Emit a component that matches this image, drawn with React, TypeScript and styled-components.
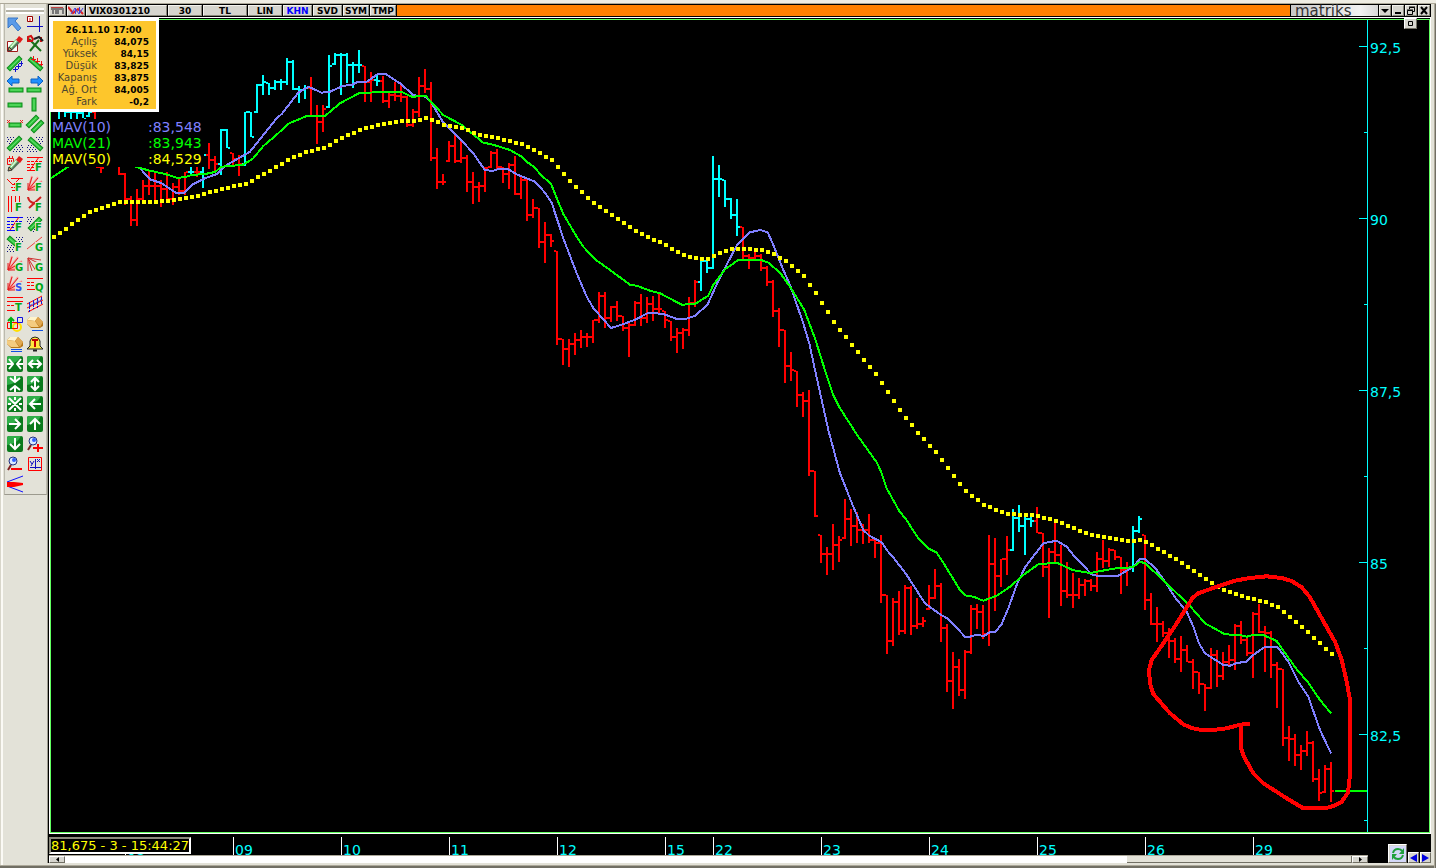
import React from "react";
import styled, { createGlobalStyle, css } from "styled-components";

const RED = "#ff0000";
const CYAN = "#00ffff";
const GREEN = "#00ff00";
const VIOLET = "#8080ff";
const YELLOW = "#ffff00";
const FACE = "#e3e2d8";

const GlobalStyle = createGlobalStyle`
  body { margin: 0; background: ${FACE}; font-family: "DejaVu Sans", Verdana, sans-serif; }
  * { box-sizing: border-box; }
  button { font: inherit; margin: 0; padding: 0; border: 0; }
  svg { display: block; }
`;

/* ---------- window layout ---------- */

const Window = styled.div`
  display: flex;
  min-height: 100vh;
  padding: 4px 5px 5px 0;
  background: ${FACE};
  box-shadow: inset 0 3px 0 #efede3, inset 0 4px 0 #aca899, inset -1px 0 0 #716f64,
    inset -2px 0 0 #aca899, inset 0 -2px 0 #716f64, inset 0 -3px 0 #aca899,
    inset 1px 0 0 #d8d6ca, inset 3px 0 0 #fbfaf5;
`;

const Sidebar = styled.aside`
  flex: 0 0 48px;
  padding-left: 4px;
  border-right: 1px solid #9c9a8e;
`;

const Palette = styled.div`
  height: 491px;
  padding-top: 4px;
  border-left: 1px solid #bcbaae;
  border-right: 1px solid #bcbaae;
  border-bottom: 1px solid #9c9a8e;
`;

const Grip = styled.div`
  height: 6px;
  margin: 0 2px 0 1px;
  border-top: 2px solid #fff;
  border-bottom: 2px solid #fff;
  background: #b4b2a6;
`;

const ToolGrid = styled.div`
  display: grid;
  grid-template-columns: 20px 20px;
  grid-auto-rows: 20px;
`;

const ToolButton = styled.button`
  display: grid;
  place-items: center;
  background: none;
`;

const Main = styled.main`
  flex: 1;
  min-width: 0;
  background: #000;
`;

const TitleBar = styled.header`
  display: flex;
  gap: 1px;
  height: 13px;
  padding: 1px;
  background: #000;
`;

const TitleButton = styled.button<{ $w: number; $on?: boolean; $left?: boolean }>`
  flex: 0 0 ${(p) => p.$w}px;
  padding-left: ${(p) => (p.$left ? 2 : 0)}px;
  background: #d6d5ce;
  border: 1px solid #f4f3ee;
  border-right-color: #8a887c;
  border-bottom-color: #8a887c;
  color: ${(p) => (p.$on ? "#0000ff" : "#000")};
  font-size: 9px;
  font-weight: bold;
  line-height: 10px;
  text-align: ${(p) => (p.$left ? "left" : "center")};
  white-space: nowrap;
`;

const TitleFill = styled.div`
  flex: 1;
  background: #ff8000;
`;

const Logo = styled.div`
  flex: 0 0 87px;
  padding-left: 4px;
  background: linear-gradient(90deg, #c8c8c8, #f2f2f2 80%, #d8d8d8);
  color: #333;
  font-size: 15px;
  line-height: 12px;
`;

const Frame = styled.section`
  position: relative;
  margin-left: 1px;
  padding-top: 1px;
  border: 1px solid #fff;
`;

const Plot = styled.div`
  border: 1px solid #60ff60;
  background: #000;
`;

const FullSvg = styled.svg`
  width: 100%;
  height: auto;
`;

const AxisText = styled.text`
  fill: ${CYAN};
  font-size: 14px;
`;

/* ---------- overlays on the chart ---------- */

const Quote = styled.dl`
  position: absolute;
  top: 0;
  left: 0;
  width: 109px;
  margin: 0;
  padding: 3px 7px 1px 0;
  border: 3px solid #fff;
  background: #fdc62c;
  color: #000;
  line-height: 12px;
`;

const QuoteTitle = styled.div`
  padding-left: 5px;
  font-size: 9px;
  font-weight: bold;
  text-align: center;
`;

const QuoteRow = styled.div`
  display: grid;
  grid-template-columns: 44px 1fr;
  text-align: right;
`;

const QuoteName = styled.dt`
  color: #4d4630;
  font-size: 10px;
`;

const QuoteValue = styled.dd`
  margin: 0;
  font-size: 9px;
  font-weight: bold;
`;

const Legend = styled.div`
  position: absolute;
  top: 101px;
  left: 1px;
  width: 153px;
  padding-left: 1px;
  background: #000;
  font-size: 14px;
  line-height: 16px;
`;

const LegendRow = styled.div<{ $color: string }>`
  display: grid;
  grid-template-columns: 96px 1fr;
  color: ${(p) => p.$color};
`;

const bevel = css`
  background: #d6d5ce;
  border: 1px solid #fff;
  border-right-color: #716f64;
  border-bottom-color: #716f64;
`;

const PinButton = styled.button`
  position: absolute;
  top: 0;
  right: 13px;
  display: grid;
  place-items: center;
  width: 13px;
  height: 11px;
  ${bevel}
`;

/* ---------- footer ---------- */

const Footer = styled.footer`
  position: relative;
  display: grid;
  grid-template-columns: 1fr 63px;
  height: 29px;
  margin-left: 1px;
`;

const AxisColumn = styled.div`
  min-width: 0;
`;

const Status = styled.output`
  position: absolute;
  top: 3px;
  left: 0;
  width: 142px;
  height: 17px;
  border: 2px solid #fff;
  border-top-color: #8a887c;
  border-left-color: #8a887c;
  background: #000;
  color: ${YELLOW};
  font-size: 13px;
  line-height: 14px;
  white-space: nowrap;
`;

const ScrollBar = styled.div`
  display: flex;
  height: 8px;
  background: #fff;
  border-top: 1px solid #aca899;
`;

const ScrollButton = styled.button`
  flex: 0 0 16px;
  display: grid;
  place-items: center;
  ${bevel}
`;

const ScrollTrack = styled.div`
  flex: 1;
  display: flex;
  justify-content: flex-end;
`;

const ScrollThumb = styled.div`
  flex: 0 0 225px;
  background: ${FACE};
  border-right: 1px solid #716f64;
  border-bottom: 1px solid #716f64;
`;

const FooterButtons = styled.div`
  display: flex;
  align-items: flex-end;
  justify-content: flex-end;
  gap: 1px;
`;

const CornerButton = styled.button<{ $w: number; $h: number }>`
  display: grid;
  place-items: center;
  width: ${(p) => p.$w}px;
  height: ${(p) => p.$h}px;
  ${bevel}
`;

/* ---------- chart data ---------- */

/* Bars are spaced six pixels apart; rows hold high, low and close in ticks,
   three ticks to the pixel, below the base line of their section. */
type Row = [number, number, number, 1?];
type Bar = { x: number; high: number; low: number; close: number; up: boolean };

const STEP = 6;
const section = (x0: number, base: number, rows: Row[]): Bar[] =>
  rows.map(([h, l, c, up], i) => ({
    x: x0 + i * STEP,
    high: base + Math.round(h / 3),
    low: base + Math.round(l / 3),
    close: base + Math.round(c / 3),
    up: up === 1,
  }));

const bars: Bar[] = [
  ...section(59, 40, [
    [200, 236, 210, 1], [205, 230, 216, 1], [205, 236, 216, 1], [200, 236, 218, 1],
    [205, 234, 236, 1], [200, 232, 216, 1], [210, 378, 382], [300, 398, 384],
    [300, 378, 350], [300, 376, 350], [300, 404, 402],
    [400, 495, 477], [468, 557, 540], [448, 557, 477], [420, 480, 437], [390, 465, 437],
    [400, 490, 437], [420, 500, 446], [396, 480, 477], [430, 495, 441], [410, 465, 453],
    [396, 465, 396], [380, 408, 396, 1], [380, 410, 396], [340, 443, 345, 1],
    [308, 388, 360], [348, 395, 372], [267, 405, 270, 1], [267, 325, 324, 1],
    [340, 375, 357], [345, 407, 372], [215, 377, 216, 1], [215, 290, 290, 1],
    [132, 218, 135, 1], [105, 165, 126, 1], [128, 165, 144, 1], [120, 150, 126, 1],
    [118, 150, 126, 1], [54, 135, 66, 1], [60, 150, 147, 1], [138, 190, 150, 1],
    [135, 178, 144, 1], [112, 230, 228], [195, 312, 246], [196, 275, 207],
    [45, 205, 78, 1], [38, 75, 45, 1], [40, 165, 45, 1], [40, 130, 75, 1],
    [65, 145, 75, 1], [30, 98, 75, 1], [78, 185, 126], [95, 187, 120],
    [105, 138, 123, 1], [108, 188, 183], [155, 205, 165], [125, 182, 168],
    [132, 185, 170], [168, 262, 254], [208, 262, 216], [112, 230, 138], [88, 160, 147],
  ]),
  ...section(431, 80, [
    [6, 242, 234], [205, 328, 306], [282, 315, 306], [183, 245, 198], [160, 250, 242],
    [180, 248, 233], [225, 335, 306], [276, 372, 320], [306, 365, 318], [262, 335, 264],
    [213, 265, 218], [208, 270, 262], [262, 308, 282], [250, 328, 256], [228, 345, 342],
    [288, 358, 300], [295, 422, 405], [357, 415, 384], [384, 503, 486], [427, 550, 465],
    [462, 500, 483], [512, 795, 777], [777, 855, 806], [778, 860, 792], [760, 825, 780],
    [750, 803, 771], [760, 800, 771], [720, 788, 720], [636, 730, 648], [636, 745, 714],
    [678, 725, 680], [663, 722, 708], [708, 752, 744], [724, 830, 735], [663, 738, 668],
    [642, 738, 714], [652, 730, 672], [648, 722, 687], [642, 705, 687], [694, 745, 720],
    [722, 782, 771], [744, 818, 758], [744, 808, 750], [652, 768, 668], [600, 680, 606],
    [535, 632, 542, 1], [538, 580, 564, 1], [228, 566, 297, 1], [255, 350, 297, 1],
    [300, 380, 357, 1], [355, 416, 405, 1], [357, 467, 441, 1],
  ]),
  ...section(743, 150, [
    [230, 330, 318], [312, 357, 324], [305, 330, 318], [312, 362, 354], [348, 407, 396],
    [390, 500, 483], [475, 590, 540], [540, 698, 648], [606, 692, 660], [662, 770, 735],
    [727, 800, 753], [720, 977, 963], [963, 1100, 1098], [1155, 1238, 1212],
    [1190, 1275, 1212], [1122, 1260, 1185], [1158, 1235, 1170], [1047, 1167, 1107],
    [1077, 1187, 1128], [1085, 1178, 1140], [1122, 1182, 1140], [1092, 1178, 1170],
    [1165, 1223, 1178], [1155, 1358, 1335],
  ]),
  ...section(887, 480, [
    [345, 522, 483], [355, 497, 366], [333, 465, 453], [315, 462, 324], [318, 465, 438],
    [355, 446, 432], [412, 440, 423], [315, 390, 354], [267, 357, 318], [310, 486, 444],
    [432, 636, 603], [516, 687, 560], [537, 647, 630], [510, 657, 516], [376, 521, 387],
    [372, 446, 396], [375, 477, 462], [165, 497, 252], [174, 392, 288], [237, 320, 237],
    [168, 285, 210], [87, 212, 114, 1], [75, 156, 137, 1], [108, 225, 117, 1],
    [110, 140, 122, 1], [82, 160, 158], [160, 290, 260], [204, 414, 215], [130, 245, 225],
    [195, 378, 333], [246, 353, 345], [279, 383, 345], [294, 357, 315], [297, 347, 303],
    [297, 332, 318], [216, 335, 237], [180, 264, 243], [204, 260, 210], [210, 240, 231],
    [230, 342, 270], [247, 318, 265], [138, 275, 153, 1], [108, 160, 117, 1],
  ]),
  ...section(1145, 500, [
    [105, 330, 300], [279, 375, 372], [321, 425, 372], [363, 410, 399], [384, 473, 423],
    [415, 488, 477], [408, 515, 450], [435, 487, 486], [478, 567, 516], [515, 582, 552],
    [552, 632, 564], [444, 567, 464], [450, 560, 528], [456, 540, 486], [435, 497, 480],
    [372, 510, 378], [363, 432, 420], [414, 467, 459], [336, 533, 342], [312, 400, 397],
    [378, 515, 400], [393, 533, 495], [486, 624, 507], [507, 738, 714], [678, 783, 717],
    [702, 797, 765], [736, 810, 753], [693, 768, 729], [723, 845, 837], [807, 903, 879],
    [795, 880, 807], [786, 906, 873],
  ]),
];

type Pt = [number, number];
/* Curve knots use the same ticks, measured from the section's own corner. */
const knots = (x0: number, y0: number, flat: number[]): Pt[] => {
  const out: Pt[] = [];
  for (let i = 0; i < flat.length; i += 2) out.push([x0 + flat[i] / 3, y0 + flat[i + 1] / 3]);
  return out;
};

const mav21: Pt[] = [
  ...knots(50, 40, [0, 417, 52, 382, 120, 345, 200, 350, 256, 380, 300, 392, 345, 402, 380, 413, 405, 412, 425, 405, 465, 402, 495, 396, 515, 380, 580, 374, 610, 355, 640, 318, 680, 284, 715, 251, 770, 228, 825, 228, 870, 190, 930, 158, 1055, 156, 1085, 170]),
  ...knots(420, 80, [17, 48, 70, 105, 125, 135, 190, 188, 215, 193, 270, 210, 305, 230, 320, 245, 345, 263, 360, 282, 393, 312, 430, 402, 470, 470, 490, 500, 525, 538, 570, 570, 630, 614, 650, 617, 690, 632, 720, 640, 785, 674, 825, 672]),
  ...knots(700, 150, [25, 437, 40, 405, 75, 358, 115, 330, 183, 330, 205, 338, 240, 368, 270, 410, 312, 478, 345, 565, 370, 645, 400, 735, 420, 775, 475, 860, 530, 937, 545, 970, 560, 1015, 598, 1083, 618, 1108, 655, 1165, 685, 1195, 710, 1208, 728, 1235, 780, 1320]),
  ...knots(840, 480, [375, 346, 400, 350, 430, 362, 470, 347, 510, 320, 550, 285, 595, 253, 650, 248, 700, 271, 750, 279, 820, 266]),
  ...knots(1120, 500, [0, 204, 38, 202, 60, 185, 75, 190, 110, 222, 150, 260, 210, 318, 255, 370, 315, 403, 360, 405, 380, 410, 400, 405, 430, 405, 470, 423, 490, 452, 530, 508, 565, 548, 600, 600, 633, 640]),
];

const mav10: Pt[] = [
  ...knots(50, 40, [240, 355, 270, 385, 300, 418, 335, 430, 380, 460, 400, 460, 425, 435, 460, 417, 500, 402, 530, 375, 600, 335, 640, 285, 680, 235, 695, 222, 745, 158, 775, 140, 815, 158, 840, 155, 880, 137, 905, 135, 920, 127, 950, 125, 985, 101, 1005, 101, 1050, 130, 1090, 165, 1105, 168]),
  ...knots(420, 80, [17, 50, 35, 70, 70, 128, 125, 182, 160, 220, 195, 271, 220, 272, 240, 266, 262, 266, 290, 283, 345, 305, 375, 338, 395, 368, 430, 475, 470, 580, 500, 650, 520, 684, 573, 744, 600, 736, 650, 717, 685, 698, 730, 702, 770, 717, 800, 716, 825, 707]),
  ...knots(700, 150, [22, 465, 60, 382, 110, 287, 150, 247, 180, 240, 203, 247, 220, 285, 250, 360, 270, 405, 310, 520, 328, 580, 345, 660, 365, 750, 385, 840, 420, 970, 460, 1070, 490, 1140, 508, 1157, 545, 1177, 560, 1200, 580, 1222]),
  ...knots(840, 480, [200, 285, 255, 370, 300, 403, 325, 417, 375, 470, 390, 470, 410, 464, 432, 468, 450, 456, 467, 455, 485, 432, 505, 385, 530, 315, 555, 262, 610, 190, 650, 182, 680, 200, 700, 225, 755, 283, 770, 287, 835, 287]),
  ...knots(1120, 500, [38, 202, 60, 177, 75, 178, 105, 203, 135, 245, 165, 292, 200, 335, 220, 380, 237, 430, 255, 460, 310, 495, 330, 497, 350, 489, 380, 485, 400, 465, 435, 440, 472, 440, 505, 485, 535, 545, 565, 590, 600, 690, 633, 760]),
];

const mav50: Pt[] = [
  ...knots(50, 40, [12, 590, 48, 566, 66, 551, 84, 540, 102, 527, 120, 516, 156, 503, 210, 487, 300, 486, 372, 480, 444, 467, 534, 443, 588, 432, 642, 402, 714, 360, 768, 336, 822, 324, 876, 293, 930, 270, 984, 255, 1056, 243, 1110, 241]),
  ...knots(420, 80, [18, 114, 36, 119, 72, 135, 126, 144, 180, 165, 234, 174, 306, 192, 360, 219, 396, 240, 450, 303, 522, 369, 576, 405, 630, 442, 684, 471, 720, 486, 792, 526, 828, 534]),
  ...knots(700, 150, [24, 327, 60, 309, 96, 297, 150, 297, 186, 300, 222, 312, 258, 333, 294, 363, 312, 378, 348, 429, 402, 516, 456, 585, 528, 672, 564, 727, 600, 780, 654, 849, 708, 906, 762, 978]),
  ...knots(840, 480, [378, 33, 414, 60, 432, 75, 486, 96, 504, 102, 576, 105, 630, 117, 666, 129, 720, 153, 756, 165, 810, 174, 864, 183]),
  ...knots(1120, 500, [60, 120, 78, 126, 132, 156, 186, 189, 240, 226, 294, 262, 330, 276, 384, 294, 438, 306, 474, 321, 510, 351, 564, 396, 636, 463]),
];

const valueAt = (line: Pt[], x: number) => {
  const i = Math.max(1, line.findIndex((p) => p[0] >= x));
  const [a, b] = [line[i - 1], line[i]];
  return a[1] + ((b[1] - a[1]) * (x - a[0])) / (b[0] - a[0]);
};

const dots: Pt[] = Array.from({ length: 214 }, (_, i) => {
  const x = 54 + i * STEP;
  return [x, Math.round(valueAt(mav50, x))];
});

const asPoints = (line: Pt[]) => line.map(([x, y]) => `${x.toFixed(1)},${y.toFixed(1)}`).join(" ");

const outline = knots(1120, 500, [383, 672, 360, 674, 320, 685, 280, 690, 245, 690, 215, 684, 190, 673, 150, 640, 100, 582, 90, 550, 87, 510, 95, 480, 130, 430, 165, 378, 200, 322, 218, 293, 235, 280, 290, 260, 345, 242, 390, 234, 440, 229, 485, 234, 515, 243, 545, 262, 570, 292, 605, 355, 645, 425, 665, 480, 680, 545, 690, 600, 690, 825, 684, 878, 665, 905, 640, 918, 615, 925, 550, 925, 500, 895, 430, 850, 400, 820, 372, 770, 363, 745, 363, 676]);

const prices: [string, number][] = [["92,5", 46], ["90", 218], ["87,5", 390], ["85", 562], ["82,5", 734]];
const days: [string, number][] = [
  ["08", 125], ["09", 233], ["10", 341], ["11", 449], ["12", 557], ["15", 665],
  ["22", 713], ["23", 821], ["24", 929], ["25", 1037], ["26", 1145], ["29", 1253],
];

function PriceChart() {
  return (
    <FullSvg viewBox="51 20 1378 812" role="img" aria-label="VIX0301210">
      <g shapeRendering="crispEdges">
        {bars.map((b, i) => {
          const color = b.up ? CYAN : RED;
          const before = i ? bars[i - 1].close : b.close;
          const open = Math.min(Math.max(before, b.high), b.low - 1);
          return (
            <g key={b.x} fill={color}>
              <rect x={b.x - 1} y={b.high} width={2} height={b.low - b.high} />
              <rect x={b.x - 3} y={open - 1} width={2} height={2} />
              <rect x={b.x + 1} y={b.close - 1} width={2} height={2} />
            </g>
          );
        })}
        <polyline points={asPoints(mav10)} fill="none" stroke={VIOLET} strokeWidth={2} />
        <polyline points={asPoints(mav21)} fill="none" stroke={GREEN} strokeWidth={2} />
        {dots.map(([x, y]) => (
          <rect key={x} x={x - 2} y={y - 2} width={4} height={4} fill={YELLOW} />
        ))}
        <rect x={1335} y={790} width={32} height={2} fill={GREEN} />
        <polyline points={asPoints(outline)} fill="none" stroke={RED} strokeWidth={4} strokeLinejoin="round" strokeLinecap="square" />
        <rect x={1367} y={20} width={1} height={812} fill={CYAN} />
        {prices.map(([, y]) => (
          <g key={y} fill={CYAN}>
            <rect x={1359} y={y} width={8} height={1} />
            <rect x={1364} y={y + 86} width={3} height={1} />
          </g>
        ))}
      </g>
      {prices.map(([label, y]) => (
        <AxisText key={y} x={1370} y={y + 7}>{label}</AxisText>
      ))}
    </FullSvg>
  );
}

function TimeAxis() {
  return (
    <FullSvg viewBox="49 834 1319 21" role="img" aria-label="26.11.10">
      {days.map(([label, x]) => (
        <g key={x}>
          <rect x={x} y={837} width={1} height={18} fill="#fff" />
          <AxisText x={x + 2} y={855}>{label}</AxisText>
        </g>
      ))}
    </FullSvg>
  );
}

/* ---------- toolbar icons ---------- */

const Stick = ({ d }: { d: string }) => (
  <>
    <path d={d} stroke="#0b8a18" strokeWidth={5} strokeLinecap="square" />
    <path d={d} stroke="#34cc44" strokeWidth={3} strokeLinecap="square" />
    <path d={d} stroke="#66dc6c" strokeWidth={1} strokeLinecap="square" />
  </>
);

const Letter = ({ c, color = "#00a818" }: { c: string; color?: string }) => (
  <>
    <rect x={8} y={6} width={8} height={10} fill={FACE} />
    <text x={8} y={15} fontSize={10} fontWeight="bold" fill={color}>{c}</text>
  </>
);

const Hatch = ({ flip }: { flip?: boolean }) => (
  <g stroke="#101080" strokeDasharray="1 2" shapeRendering="crispEdges" transform={flip ? "translate(16 0) scale(-1 1)" : undefined}>
    <path d="M0 1h9M1 3h6M0 5h5M2 7h2M11 9h5M9 11h7M7 13h9M6 15h10" />
  </g>
);

const Pencil = () => (
  <>
    <path d="M3 13L11 5" stroke="#55705a" strokeWidth={5} />
    <path d="M3 12L10 4" stroke="#8fdc8f" strokeWidth={3} />
    <path d="M4 11L10 4" stroke="#fff" />
    <path d="M9 4l3-4 4 3-3 4z" fill="#e01818" />
    <path d="M1 15l1-4 3 3z" fill="#caa060" stroke="#333" />
  </>
);

const Fan = () => (
  <>
    <path d="M1 14L5 0M1 14L11 1M1 14L15 5M1 14L15 11" stroke="#ff9a9a" strokeWidth={2} />
    <path d="M1 14L5 1M1 14L11 2M1 14L15 6M1 14V7M1 14h8" stroke="#e02020" />
  </>
);

const Tile = ({ d }: { d: string }) => (
  <>
    <rect width={16} height={16} rx={2} fill="#0a7a1c" />
    <path d="M0 2Q0 0 2 0H14Q10 8 0 9z" fill="#2fae48" />
    <path d={d} stroke="#fff" strokeWidth={2} />
  </>
);

const Eraser = ({ lines }: { lines: number }) => (
  <>
    <path d="M0 4l3-3h8l5 5v4l-3 2H4L0 8z" fill="#b87818" />
    <path d="M0 4l3-3h8l-3 4z" fill="#fff4cc" />
    <path d="M0 4l8 1 4 6H4L0 8z" fill="#f4cc80" />
    <path d="M8 5l3-4 5 5-3 5z" fill="#e0a850" />
    <path d={lines > 1 ? "M4 13.500h11M4 15.500h11" : "M5 14.500h11"} stroke="#1050e0" />
  </>
);

const Lens = ({ plus }: { plus?: boolean }) => (
  <>
    <path d="M4 9L1 14" stroke="#802020" strokeWidth={2} />
    <circle cx={6} cy={5} r={4} fill="#d8e8ff" stroke="#203080" />
    <circle cx={7} cy={4} r={2} fill="#3060ff" />
    <path d={plus ? "M6 12h10M11 8v8" : "M4 13h11"} stroke={RED} strokeWidth={2} />
  </>
);

const IN_H = "M0 8h5M16 8h-5M2 3l4 5-4 5M14 3l-4 5 4 5";
const OUT_H = "M2 8h12M6 4L2 8l4 4M10 4l4 4-4 4";
const IN_V = "M8 0v5M8 16v-5M3 2l5 4 5-4M3 14l5-4 5 4";
const OUT_V = "M8 2v12M4 6l4-4 4 4M4 10l4 4 4-4";

const tools: [string, React.ReactNode][] = [
  ["Select", <path d="M1 2h10l-3 3 6 7-3 3-6-7-4 4z" fill="#5b9be8" stroke="#3a78c8" />],
  ["Crosshair", <><path d="M12.500 0v16M0 10.500h16" stroke="#1010c0" /><path d="M0.500 0.500h5v5h-5z" fill="#fff" stroke="#900" /><path d="M3 2v3" stroke="#f00" /></>],
  ["Draw", <><path d="M0.500 5.500h10v10h-10z" fill="#fff" stroke="#a01818" /><Pencil /></>],
  ["Tools", <><path d="M2 3L14 15M3 15L12 4" stroke="#187018" strokeWidth={2} /><path d="M1 1v4h4l1-2-2-3zM14 1v5" stroke="#d01010" strokeWidth={2} /><path d="M7 3l5-2 4 4" stroke="#222" strokeWidth={2} /></>],
  ["Support", <><Stick d="M3 12L12 3" /><path d="M8.500 11v5M6 13.500h5M11.500 8v5M9 10.500h5M14.500 5v5M12 7.500h4" stroke="#1010d0" /></>],
  ["Resistance", <><Stick d="M4 4L13 12" /><path d="M6.500 0v5M4 3.500h5M10.500 2v5M8 5.500h5M14.500 5v5M12 8.500h4" stroke="#f01010" /></>],
  ["Extend left", <><Stick d="M4 14H14" /><path d="M0 5l5-5v3h7v4H5v3z" fill="#2090ff" stroke="#1060c0" /></>],
  ["Extend right", <><Stick d="M2 14H12" /><path d="M16 5l-5-5v3H4v4h7v3z" fill="#2090ff" stroke="#1060c0" /></>],
  ["Horizontal", <Stick d="M3 9H13" />],
  ["Vertical", <Stick d="M7 4V13" />],
  ["Segment", <><Stick d="M4 9H12" /><path d="M0 4l3 3M3 4L0 7M13 4l3 3M16 4l-3 3" stroke="#f02020" /></>],
  ["Parallel", <><Stick d="M2 9L9 2" /><Stick d="M7 14L14 7" /></>],
  ["Rising band", <><Hatch /><Stick d="M3 12L12 3" /></>],
  ["Falling band", <><Hatch flip /><Stick d="M4 4L13 12" /></>],
  ["Note", <><path d="M0.500 2.500h6v6h-6zM2.500 0v2M5.500 0v2M2.500 4v2M4.500 4v2" stroke="#f01010" /><Pencil /></>],
  ["Retracement", <><path d="M0 1.500h16M0 14.500h9" stroke={RED} /><path d="M0 5.500h16M0 8.500h16M0 11.500h9" stroke={RED} strokeDasharray="3 1" /><path d="M12 1L3 14" stroke={RED} /><Letter c="F" /></>],
  ["Extension", <><path d="M4 2.500h12M0 3l6 6 6-6M5 8.500h8M5 14.500h4" stroke={RED} /><path d="M4 11.500h8" stroke={RED} strokeDasharray="2 1" /><Letter c="F" /></>],
  ["Fib fan", <><Fan /><Letter c="F" /></>],
  ["Time zones", <><path d="M1.500 0v16M4.500 0v16M8.500 0v16M12.500 0v16" stroke={RED} /><Letter c="F" /></>],
  ["Fib arc", <><path d="M1 1q1 8 14 6M2 12L14 1" stroke="#d02020" strokeWidth={2} /><Letter c="F" /></>],
  ["Channel retracement", <><path d="M0 1.500h16M0 14.500h9" stroke="#0000ff" /><path d="M0 5.500h16M0 8.500h16M0 11.500h9" stroke="#0000ff" strokeDasharray="3 1" /><path d="M12 1L3 14" stroke={RED} /><Letter c="F" /></>],
  ["Rising channel", <><Hatch /><Stick d="M4 12L12 4" /><Letter c="F" /></>],
  ["Falling channel", <><Hatch flip /><Stick d="M3 3L11 10" /><Letter c="F" /></>],
  ["Gann line", <><path d="M0 13L15 1" stroke="#f04040" strokeWidth={1} /><Letter c="G" /></>],
  ["Gann fan", <><Fan /><Letter c="G" /></>],
  ["Gann box", <><path d="M1 2l13 2M1 2l12 6M1 2l8 13M1 2v13M1 2l4 13" stroke="#d03030" /><Letter c="G" /></>],
  ["Speed lines", <><Fan /><Letter c="S" color="#3050f0" /></>],
  ["Quadrant", <><path d="M0 2.500h16M0 13.500h9" stroke={RED} /><path d="M0 6.500h16M0 9.500h9" stroke={RED} strokeDasharray="3 1" /><Letter c="Q" /></>],
  ["Tirone", <><path d="M0 1.500h16M0 5.500h16M0 14.500h9" stroke={RED} /><path d="M0 9.500h10" stroke={RED} strokeDasharray="3 1" /><Letter c="T" /></>],
  ["Regression", <><path d="M0 8L15 0M0 12L16 4M1 16L16 8" stroke={RED} /><path d="M2.500 6v10M6.500 4v9M10.500 2v10M14.500 1v8M2 10l12-6" stroke="#1818d0" strokeDasharray="3 1" /></>],
  ["Shapes", <><circle cx={10} cy={11} r={4} stroke="#ffe000" strokeWidth={2} /><path d="M0.500 6.500h10v6h-10z" stroke={RED} /><path d="M10.500 1.500h5v5h-5z" stroke="#1010e0" /><path d="M4 13V3M1 5l3-3 3 3" stroke="#00b010" strokeWidth={2} /></>],
  ["Erase", <Eraser lines={1} />],
  ["Erase all", <Eraser lines={2} />],
  ["Alarm", <><path d="M0 13l3-3V5q1-4 5-4t5 4v5l3 3z" fill="#ffe840" stroke="#222" /><path d="M5 4h6M8 4v7" stroke="#c00000" strokeWidth={2} /><path d="M6 14.500h4" stroke="#222" strokeWidth={2} /></>],
  ["Narrow", <Tile d={IN_H} />],
  ["Widen", <Tile d={OUT_H} />],
  ["Shorten", <Tile d={IN_V} />],
  ["Heighten", <Tile d={OUT_V} />],
  ["Fit", <Tile d="M2 2l12 12M14 2L2 14M8 1v3M8 12v3M1 8h3M12 8h3" />],
  ["Left", <Tile d="M14 8H3M8 3L3 8l5 5" />],
  ["Right", <Tile d="M2 8h11M8 3l5 5-5 5" />],
  ["Up", <Tile d="M8 14V3M3 8l5-5 5 5" />],
  ["Down", <Tile d="M8 2v11M3 8l5 5 5-5" />],
  ["Zoom in", <Lens plus />],
  ["Zoom out", <Lens />],
  ["Axes", <><path d="M1.500 1.500h13v13h-13z" stroke={RED} /><path d="M8.500 3v10M3 11.500h11M3 5l2 3M7 5l-3 5M10 3l3 3M13 3l-3 3" stroke="#1010c0" /></>],
  ["Projection", <><path d="M0 6l16-6M0 10l16 6" stroke="#1010ff" /><path d="M0 6h7l9 1v2l-9 2H0z" fill={RED} /></>],
];

const Icon = ({ size = 16, children }: { size?: number; children: React.ReactNode }) => (
  <svg width={size} height={size} viewBox="0 0 16 16" fill="none" overflow="visible" aria-hidden="true">{children}</svg>
);

const quote: [string, string][] = [
  ["Açılış", "84,075"], ["Yüksek", "84,15"], ["Düşük", "83,825"],
  ["Kapanış", "83,875"], ["Ağ. Ort", "84,005"], ["Fark", "-0,2"],
];

const modes: [string, number][] = [
  ["30", 34], ["TL", 44], ["LIN", 34], ["KHN", 29], ["SVD", 29], ["SYM", 26], ["TMP", 26],
];

export default function App() {
  return (
    <>
      <GlobalStyle />
      <Window>
        <Sidebar>
          <Palette>
            <Grip />
            <ToolGrid>
              {tools.map(([name, art]) => (
                <ToolButton key={name} aria-label={name}><Icon>{art}</Icon></ToolButton>
              ))}
            </ToolGrid>
          </Palette>
        </Sidebar>
        <Main>
          <TitleBar>
            <TitleButton $w={17} aria-label="Layout">
              <svg width={15} height={9} fill="none"><path d="M1 3h5v5M8 8V3h5v5M3 3v5" stroke="#777" strokeWidth={2} /><path d="M1 1.500h12" stroke="#c04040" /></svg>
            </TitleButton>
            <TitleButton $w={18} aria-label="Indicators">
              <svg width={16} height={9} fill="none"><path d="M0 1l5 6 5-4 5 5" stroke="#e02020" strokeWidth={2} /><path d="M3 8l4-6 4 6 4-6M7.500 2v6M11.500 1v6" stroke="#4040e0" /></svg>
            </TitleButton>
            <TitleButton $w={81} $left>VIX0301210</TitleButton>
            {modes.map(([m, w]) => (
              <TitleButton key={m} $w={w} $on={m === "KHN"}>{m}</TitleButton>
            ))}
            <TitleFill />
            <Logo>matriks</Logo>
            <TitleButton $w={12} aria-label="Menu">
              <svg width={10} height={9}><path d="M1 3h8L5 7z" /></svg>
            </TitleButton>
            <TitleButton $w={12} aria-label="Minimize">
              <svg width={10} height={9}><rect x={2} y={6} width={6} height={2} /></svg>
            </TitleButton>
            <TitleButton $w={12} aria-label="Restore">
              <svg width={10} height={9} fill="none" stroke="#000"><path d="M3.500 3V1.500h5v4H7M1.500 4.500h5v4h-5zM1 4h6M3 1h6" /></svg>
            </TitleButton>
            <TitleButton $w={12} aria-label="Close">
              <svg width={10} height={9} stroke="#000" strokeWidth={2}><path d="M2 1l6 7M8 1L2 8" /></svg>
            </TitleButton>
          </TitleBar>
          <Frame>
            <Plot><PriceChart /></Plot>
            <Legend>
              <LegendRow $color={VIOLET}><span>MAV(10)</span><span>:83,548</span></LegendRow>
              <LegendRow $color={GREEN}><span>MAV(21)</span><span>:83,943</span></LegendRow>
              <LegendRow $color={YELLOW}><span>MAV(50)</span><span>:84,529</span></LegendRow>
            </Legend>
            <Quote>
              <QuoteTitle>26.11.10 17:00</QuoteTitle>
              {quote.map(([name, value]) => (
                <QuoteRow key={name}>
                  <QuoteName>{name}</QuoteName>
                  <QuoteValue>{value}</QuoteValue>
                </QuoteRow>
              ))}
            </Quote>
            <PinButton aria-label="Pin">
              <svg width={7} height={7} fill="none"><path d="M1.500 1.500h4v4h-4z" stroke="#000" /></svg>
            </PinButton>
          </Frame>
          <Footer>
            <AxisColumn>
              <TimeAxis />
              <ScrollBar>
                <ScrollButton aria-label="Scroll left"><svg width={3} height={5}><path d="M3 0v5L0 2.500z" /></svg></ScrollButton>
                <ScrollTrack><ScrollThumb /></ScrollTrack>
                <ScrollButton aria-label="Scroll right"><svg width={3} height={5}><path d="M0 0v5l3-2.500z" /></svg></ScrollButton>
              </ScrollBar>
            </AxisColumn>
            <FooterButtons>
              <CornerButton $w={19} $h={19} aria-label="Refresh">
                <Icon>
                  <rect width={16} height={16} fill="#d4d8f8" />
                  <path d="M3 7q1-4 5-4 3 0 4 2M13 9q-1 4-5 4-3 0-4-2" stroke="#1fa03c" strokeWidth={2} />
                  <path d="M14 2v6H9zM2 14V8h5z" fill="#1fa03c" />
                </Icon>
              </CornerButton>
              <CornerButton $w={11} $h={11} aria-label="Previous"><svg width={7} height={8}><path d="M7 0v8L0 4z" fill="#0000e0" /></svg></CornerButton>
              <CornerButton $w={11} $h={11} aria-label="Next"><svg width={7} height={8}><path d="M0 0v8l7-4z" fill="#0000e0" /></svg></CornerButton>
            </FooterButtons>
            <Status>81,675 - 3 - 15:44:27</Status>
          </Footer>
        </Main>
      </Window>
    </>
  );
}
